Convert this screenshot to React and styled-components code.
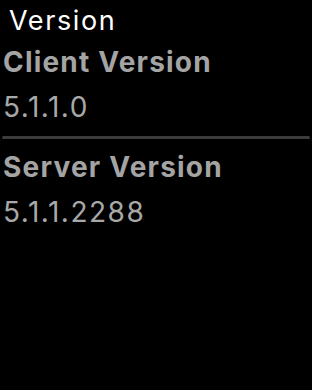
import styled, { createGlobalStyle } from 'styled-components';

const GlobalStyle = createGlobalStyle`
    html, body {
        margin: 0;
        padding: 0;
        background: #000;
    }
    body {
        font-family: Inter, "Noto Sans", sans-serif;
        width: 312px;
        height: 390px;
        overflow: hidden;
    }
`;

const Screen = styled.div`
    width: 312px;
    height: 390px;
    background: #000;
    display: flex;
    flex-direction: column;
`;

const Title = styled.h1`
    margin: 0;
    padding: 0 0 0 9px;
    font-size: 27px;
    font-weight: 400;
    letter-spacing: 1.6px;
    line-height: 42px;
    color: #fff;
`;

const Section = styled.section`
    display: flex;
    flex-direction: column;
    padding: 0 3px;
`;

const Label = styled.p`
    margin: 0;
    font-size: 28px;
    font-weight: 700;
    letter-spacing: 1.2px;
    line-height: 40px;
    color: #a4a4a4;
`;

const Value = styled.p`
    margin: 5px 0 0;
    font-size: 28px;
    font-weight: 400;
    letter-spacing: 1.5px;
    line-height: 40px;
    color: #a8a8a8;
`;

const Divider = styled.hr`
    margin: 9px 2px 8px;
    border: none;
    height: 3px;
    border-radius: 1.5px;
    background: #3b3b3b;
`;

function App() {
    return <>
        <GlobalStyle />
        <Screen>
            <Title>Version</Title>
            <Section>
                <Label>Client Version</Label>
                <Value>5.1.1.0</Value>
            </Section>
            <Divider />
            <Section>
                <Label>Server Version</Label>
                <Value>5.1.1.2288</Value>
            </Section>
        </Screen>
    </>
}

export default App
